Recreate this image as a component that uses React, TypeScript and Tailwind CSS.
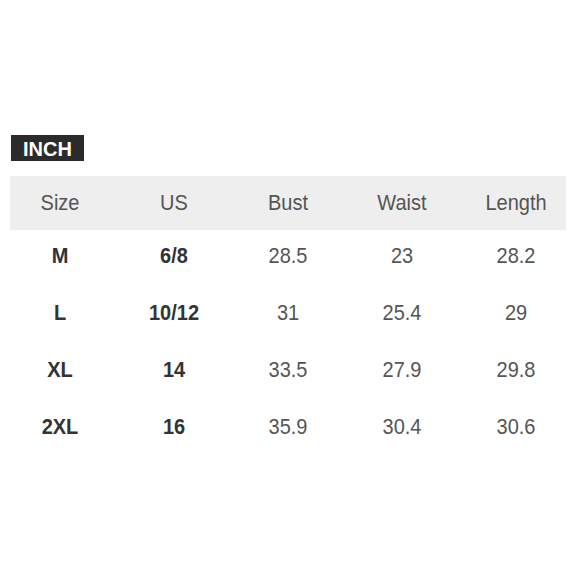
const headers = ['Size', 'US', 'Bust', 'Waist', 'Length'];

const rows = [
  ['M', '6/8', '28.5', '23', '28.2'],
  ['L', '10/12', '31', '25.4', '29'],
  ['XL', '14', '33.5', '27.9', '29.8'],
  ['2XL', '16', '35.9', '30.4', '30.6'],
];

export default function App() {
  return (
    <div
      className="w-[580px] h-[580px] bg-white pt-[135px] px-[3px]"
      style={{ fontFamily: '"Liberation Sans", Arial, sans-serif' }}
    >
      {/* unit badge */}
      <div className="ml-[8px] flex items-center justify-center h-[26px] w-[73px] bg-[#2b2b2b] text-white font-bold text-[20px] leading-none pt-px">
        INCH
      </div>

      <div className="w-[570px] mt-[15px]">
        {/* header band */}
        <div className="mx-[7px] bg-[#eeeeee] h-[54px]">
          <div className="-mx-[7px] grid grid-cols-5 h-full items-center pb-[2px] text-[20px] text-[#555]">
            {headers.map((h) => (
              <div key={h} className="text-center scale-y-110">
                {h}
              </div>
            ))}
          </div>
        </div>

        {rows.map((r) => (
          <div key={r[0]} className="grid grid-cols-5 h-[57px] pb-[7px] items-center text-[20px] text-[#555]">
            {r.map((cell, i) => (
              <div
                key={i}
                className={`text-center scale-y-110 ${i < 2 ? 'font-bold text-[#333]' : ''}`}
              >
                {cell}
              </div>
            ))}
          </div>
        ))}
      </div>
    </div>
  );
}
